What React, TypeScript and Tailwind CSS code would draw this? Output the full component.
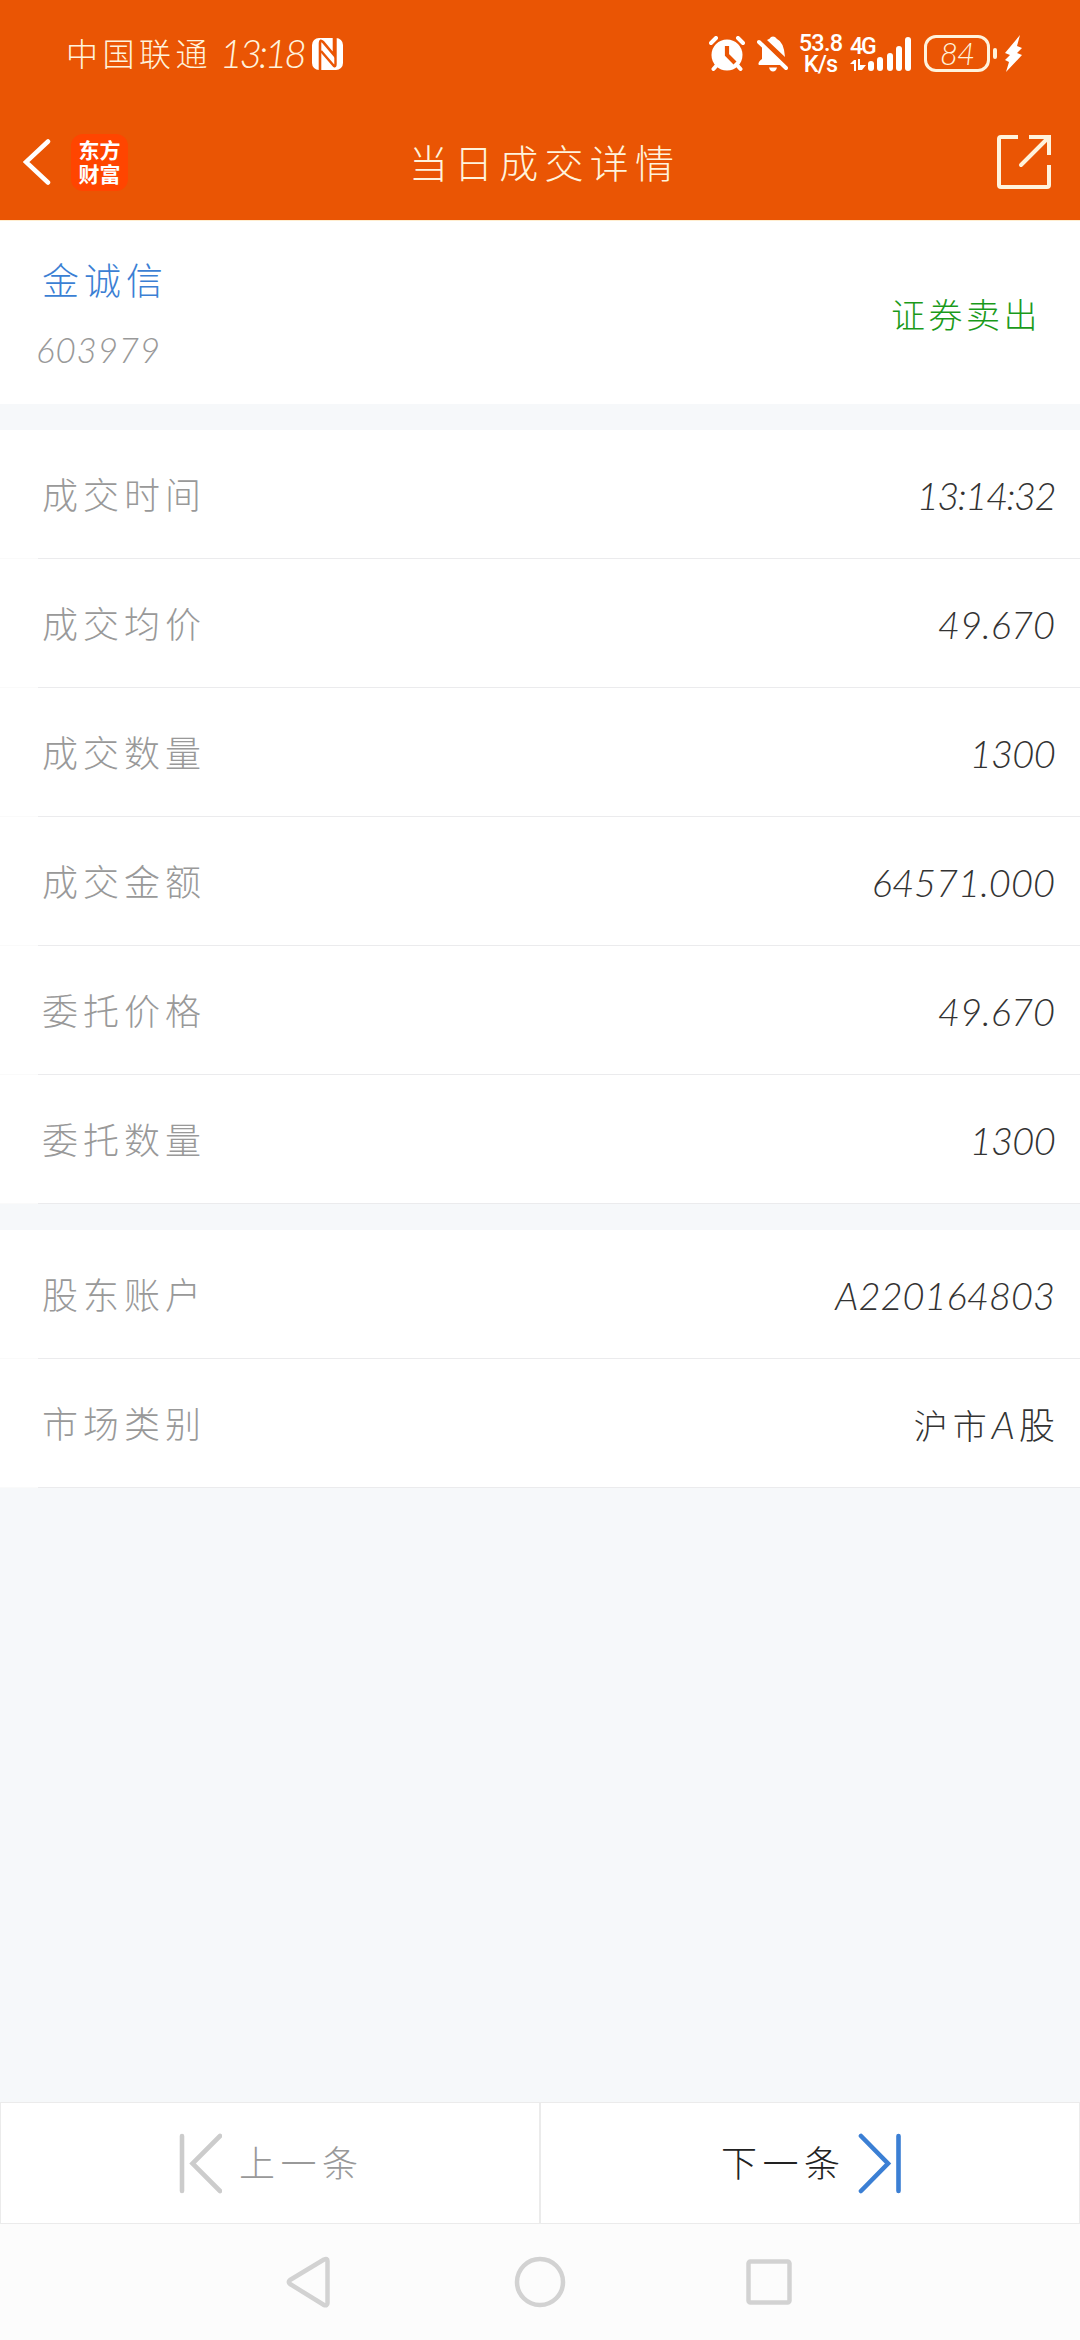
import type { ReactNode } from "react";

const orders = [
  { label: "成交时间", value: "13:14:32", valueClass: "tracking-[-1.5px]" },
  { label: "成交均价", value: "49.670" },
  { label: "成交数量", value: "1300", valueClass: "tracking-[-0.7px]" },
  { label: "成交金额", value: "64571.000" },
  { label: "委托价格", value: "49.670" },
  { label: "委托数量", value: "1300", valueClass: "tracking-[-0.7px]" },
];

const StatusBar = () => (
  <div className="flex h-[107px] items-center pr-[58px] pl-[66px] text-[#fff3dc]">
    <span className="w-[154px] text-[32px] tracking-[4.5px] whitespace-nowrap">中国联通</span>
    <span className="w-[92px] text-[39px] italic tracking-[-3.2px] whitespace-nowrap">13:18</span>

    {/* NFC */}
    <svg width="31" height="32" viewBox="0 0 31 32" className="shrink-0">
      <rect width="31" height="32" rx="7" fill="#fff" />
      <path d="M8 32V5Q8 1 11 4L22 17V0" stroke="#ea5504" strokeWidth="2.6" fill="none" />
      <path d="M9 13L22 28Q23.500 29 23.500 26V0" stroke="#ea5504" strokeWidth="2.4" fill="none" />
    </svg>

    {/* Alarm */}
    <svg width="36" height="36" viewBox="0 0 36 36" className="ml-auto shrink-0">
      <circle cx="18" cy="19" r="15.5" fill="#fff" />
      <path d="M2 7l5-5M29 2l5 5M8 29l-3.5 4M28 29l3.5 4" stroke="#fff" strokeWidth="4" strokeLinecap="round" />
      <path d="M18 10v9l8 8" stroke="#ea5504" strokeWidth="4.2" fill="none" />
    </svg>

    {/* Muted bell */}
    <svg width="31" height="36" viewBox="0 0 31 36" className="ml-[12px] shrink-0">
      <path d="M10 4Q13 3 14 1Q16 0 18 1L20 3Q27 6 28 21z" fill="#fff" />
      <path d="M5 9L25 29H2Q0 27 5 23z" fill="#fff" />
      <path d="M12 31.500h8q-1 4-4 4t-4-4z" fill="#fff" />
      <path d="M2 6l27 26" stroke="#fff" strokeWidth="4" strokeLinecap="round" />
    </svg>

    <div className="ml-[11px] flex w-[43px] flex-col items-center font-[Roboto] text-[23.5px] leading-[21px] font-medium tracking-[-0.8px] text-white">
      <span>53.8</span>
      <span>K/s</span>
    </div>

    <div className="ml-[8px] flex h-[34px] w-[63px] items-end">
      <div className="flex w-[18px] flex-col items-start">
        <span className="mb-[2px] font-[Roboto] text-[23px] leading-[20px] font-medium tracking-[-2px] text-white">4G</span>
        <svg width="16" height="12" viewBox="0 0 16 12">
          <path d="M0 5l4-4h2v11H4V5zM8 0h2v6h6l-4 5H8z" fill="#fff" />
        </svg>
      </div>
      <div className="flex items-end gap-[3.3px]">
        <i className="h-[10px] w-[6px] rounded-full bg-white" />
        <i className="h-[14px] w-[6px] rounded-full bg-white" />
        <i className="h-[18px] w-[6px] rounded-full bg-white" />
        <i className="h-[25px] w-[6px] rounded-full bg-white" />
        <i className="h-[34px] w-[6px] rounded-full bg-white" />
      </div>
    </div>

    <div className="ml-[11px] flex h-[37px] w-[66px] items-center justify-center rounded-[12px] border-3 border-[#fff3dc] text-[31px] leading-none italic tracking-[-1px]">
      84
    </div>
    <i className="ml-[3px] h-[11px] w-[4px] rounded-full bg-[#fff3dc]" />
    <svg width="17" height="37" viewBox="0 0 17 37" className="ml-[8px] shrink-0">
      <path d="M15 0L0 18l5 2-5 5 4 2L1 37l16-17-5-2 5-5-5-2z" fill="#fff" />
    </svg>
  </div>
);

const Header = () => (
  <div className="flex h-[113px] items-center justify-between pr-[28px] pb-[3px] pl-[23px] text-[#fff3dc]">
    <div className="flex w-[360px] items-center">
      <svg width="28" height="46" viewBox="0 0 28 46">
        <path d="M25 2.500L3 23l22 20.500" stroke="#fff" strokeWidth="4.500" strokeLinecap="round" fill="none" />
      </svg>
      <div className="ml-[20px] flex size-[57px] flex-col items-center justify-center rounded-[12px] bg-[#ff4500] text-[21px] leading-[24px] font-bold text-white">
        <span>东方</span>
        <span>财富</span>
      </div>
    </div>
    <h1 className="ml-[14px] pt-[2px] text-[39px] tracking-[6.2px] whitespace-nowrap">当日成交详情</h1>
    <div className="flex w-[360px] justify-end">
      <svg width="56" height="56" viewBox="0 0 56 56" fill="none" stroke="#fff3dc" strokeWidth="4">
        <path d="M22 3H5Q3 3 3 5V51Q3 53 5 53H51Q53 53 53 51V31" />
        <path d="M33 3H53V21" />
        <path d="M52 4L25 31" strokeLinecap="round" />
      </svg>
    </div>
  </div>
);

const Row = ({ label, value, valueClass = "" }: { label: string; value: ReactNode; valueClass?: string }) => (
  <div className="flex h-[129px] flex-col bg-white">
    <div className="flex flex-1 items-center justify-between pt-[2px] pr-[25px] pl-[42px]">
      <span className="text-[36px] tracking-[5px] text-[#999]">{label}</span>
      <span className={`text-[38px] text-[#333] italic ${valueClass}`}>{value}</span>
    </div>
    <div className="flex h-px bg-[#fafafa]">
      <div className="ml-[38px] flex-1 bg-[#ebebed]" />
    </div>
  </div>
);

export default function App() {
  return (
    <div className="flex h-[2340px] w-[1080px] flex-col bg-[#f6f8fa] font-[Lato,'Noto_Sans_CJK_SC',sans-serif] font-light">
      <header className="h-[221px] border-b border-[#ffeed0] bg-[#ea5504]">
        <StatusBar />
        <Header />
      </header>

      <section className="flex h-[183px] items-center justify-between bg-white pt-[4px] pr-[39px] pl-[36px]">
        <div className="flex flex-col">
          <span className="pl-[6px] text-[37px] leading-[60px] tracking-[5px] text-[#3b7fd4]">金诚信</span>
          <span className="mt-[8px] text-[35px] leading-[60px] tracking-[0.8px] text-[#999] italic">603979</span>
        </div>
        <span className="text-[34px] tracking-[3.5px] text-[#1a9a1a]">证券卖出</span>
      </section>

      <section className="mt-[26px]">
        {orders.map((item) => (
          <Row key={item.label} {...item} />
        ))}
      </section>

      <section className="mt-[26px]">
        <Row label="股东账户" value="A220164803" />
        <Row
          label="市场类别"
          value={
            <span className="not-italic">
              <span className="text-[34px] tracking-[5px]">沪市</span>
              <span className="italic">A</span>
              <span className="ml-[4px] text-[36px]">股</span>
            </span>
          }
        />
      </section>

      <footer className="mt-auto">
        <div className="grid h-[122px] grid-cols-2 text-[36px] tracking-[5.500px]">
          <button className="flex items-center border border-[#ebebeb] bg-white pl-[178px] text-[#999]">
            <svg width="43" height="61" viewBox="0 0 43 61" fill="none" stroke="#ccc" strokeWidth="4.600" strokeLinecap="round">
              <path d="M3 3V58M41 3L13.500 30.500L41 58" />
            </svg>
            <span className="ml-[17px]">上一条</span>
          </button>
          <button className="flex items-center border border-[#ebebeb] bg-white pl-[180px] text-[#222]">
            <span>下一条</span>
            <svg width="43" height="61" viewBox="0 0 43 61" fill="none" stroke="#3b7fd4" strokeWidth="4.600" strokeLinecap="round" className="ml-[12px]">
              <path d="M40.500 3V58M3 3L30 30.500L3 58" />
            </svg>
          </button>
        </div>

        {/* System navigation */}
        <div className="flex h-[116px] items-center bg-[#fcfcfc] pl-[286px]">
          <svg width="508" height="54" viewBox="0 0 508 54" fill="none" stroke="#d2d2d2" strokeWidth="4.500" strokeLinejoin="round">
            <path d="M38 4.500Q41.500 3 41.500 6V48Q41.500 51 38 50L4 29Q1.500 27 4 25z" />
            <circle cx="254" cy="27" r="23" />
            <rect x="462.500" y="6.500" width="41" height="41" rx="2" />
          </svg>
        </div>
      </footer>
    </div>
  );
}
